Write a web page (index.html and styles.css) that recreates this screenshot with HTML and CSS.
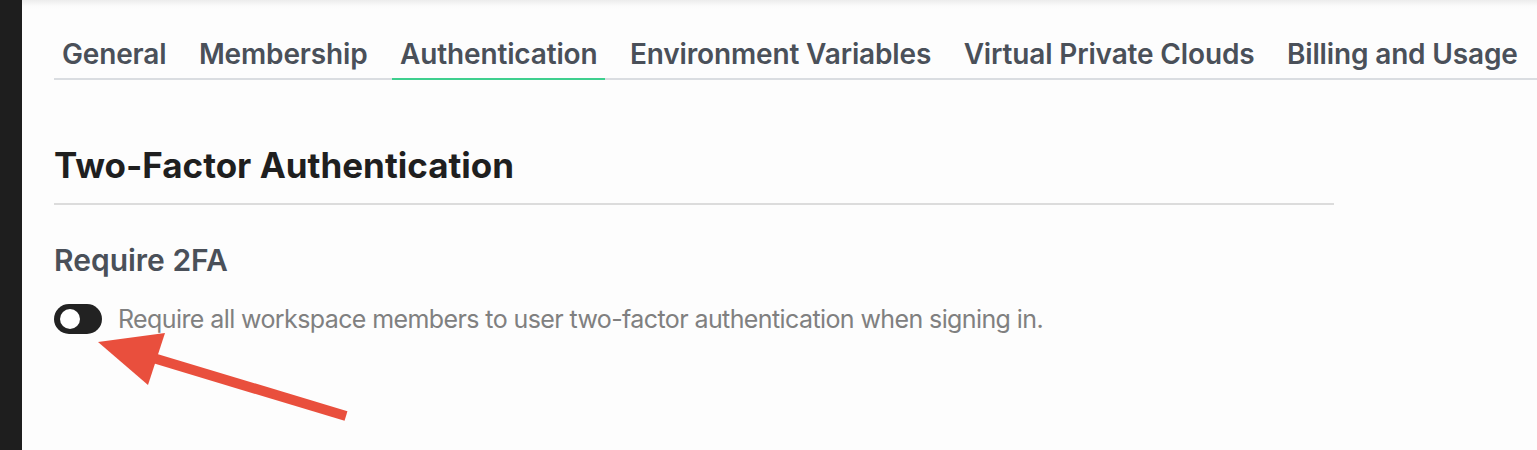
FILE: index.html
```html
<!DOCTYPE html>
<html>
<head>
<meta charset="utf-8">
<link rel="stylesheet" href="styles.css">
</head>
<body>
<div class="app">
  <aside class="sidebar"></aside>
  <main class="main">
    <nav class="tabs">
      <a class="tab">General</a>
      <a class="tab">Membership</a>
      <a class="tab active">Authentication</a>
      <a class="tab">Environment Variables</a>
      <a class="tab">Virtual Private Clouds</a>
      <a class="tab">Billing and Usage</a>
    </nav>
    <section class="section">
      <h1 class="title">Two-Factor Authentication</h1>
      <h2 class="subtitle">Require 2FA</h2>
      <div class="row">
        <span class="toggle"><span class="knob"></span></span>
        <span class="desc">Require all workspace members to user two-factor authentication when signing in.</span>
      </div>
    </section>
  </main>
</div>
<svg class="arrow" width="1537" height="450" viewBox="0 0 1537 450">
  <line x1="346" y1="416" x2="150" y2="357" stroke="#e94f3d" stroke-width="10"/>
  <polygon points="98,342 165,333 148,385" fill="#e94f3d"/>
</svg>
</body>
</html>
```
FILE: styles.css
```css
html, body {
  margin: 0;
  padding: 0;
  height: 100%;
  background: #fdfdfd;
  font-family: Inter, "Noto Sans", sans-serif;
}
.app {
  display: flex;
  height: 450px;
  overflow: hidden;
}
.sidebar {
  width: 22px;
  flex: none;
  background: #1e1e1e;
}
.main {
  flex: 1;
  padding-left: 32px;
  background: linear-gradient(#ececec 0, #fbfbfb 6px, #fdfdfd 10px);
}
.tabs {
  display: flex;
  gap: 16.5px;
  padding-top: 38px;
  border-bottom: 2px solid #dadde1;
  white-space: nowrap;
}
.tab {
  padding: 0 8px 8px;
  font-size: 28px;
  line-height: 32px;
  font-weight: 600;
  color: #4a5059;
  border-bottom: 2px solid transparent;
  margin-bottom: -2px;
  letter-spacing: -0.15px;
}
.tab.active {
  border-bottom-color: #3ecf8e;
}
.section {
  width: 1280px;
}
.title {
  margin: 64px 0 0;
  padding-bottom: 17px;
  font-size: 35px;
  line-height: 42px;
  font-weight: 700;
  color: #1f1f1f;
  border-bottom: 2px solid #dcdcdc;
}
.subtitle {
  margin: 37px 0 0;
  font-size: 30px;
  line-height: 36px;
  font-weight: 600;
  color: #4a5059;
}
.row {
  display: flex;
  align-items: center;
  gap: 16px;
  margin-top: 26px;
}
.toggle {
  width: 48px;
  height: 30px;
  border-radius: 15px;
  background: #222;
  display: flex;
  align-items: center;
  padding-left: 6px;
  box-sizing: border-box;
}
.knob {
  width: 20px;
  height: 20px;
  border-radius: 50%;
  background: #fff;
}
.desc {
  font-size: 25px;
  color: #808080;
  letter-spacing: -0.6px;
}
.arrow {
  position: absolute;
  left: 0;
  top: 0;
  pointer-events: none;
}
```
